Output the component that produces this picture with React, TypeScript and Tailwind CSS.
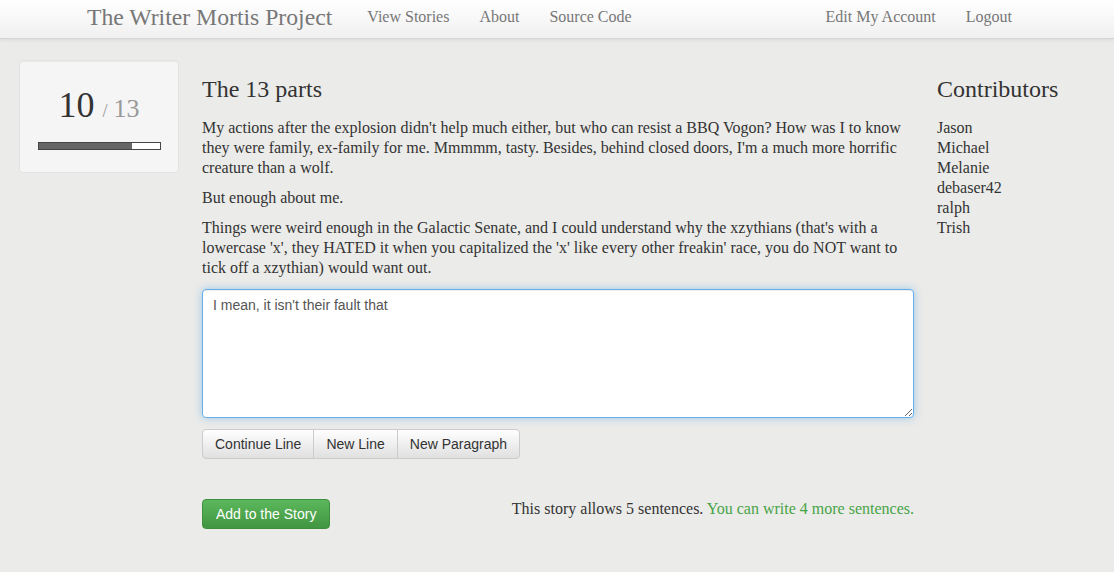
import React from 'react';

const serif = { fontFamily: '"Liberation Serif", "DejaVu Serif", serif' };
const sans = { fontFamily: '"Liberation Sans", Arial, sans-serif' };

function NavLink({ children }: { children: React.ReactNode }) {
  return <a className="px-[15px] text-[16px] text-[#777] leading-[34px]">{children}</a>;
}

function Navbar() {
  return (
    <div className="h-[39px] border-b border-[#d5d5d5] bg-gradient-to-b from-white to-[#f0f0f0] shadow-[0_1px_4px_rgba(0,0,0,0.08)]">
      <div className="mx-auto flex w-[970px] items-center px-[15px]">
        <a className="mr-[20px] text-[23.7px] leading-[34px] text-[#777]">The Writer Mortis Project</a>
        <NavLink>View Stories</NavLink>
        <NavLink>About</NavLink>
        <NavLink>Source Code</NavLink>
        <div className="flex-1" />
        <NavLink>Edit My Account</NavLink>
        <NavLink>Logout</NavLink>
      </div>
    </div>
  );
}

function ProgressWell() {
  const done = 10;
  const total = 13;
  return (
    <div className="flex h-[113px] w-[160px] shrink-0 flex-col items-center rounded border border-[#e3e3e3] bg-[#f5f5f5] pt-[26px] shadow-[inset_0_1px_1px_rgba(0,0,0,0.05)]">
      <div className="flex items-baseline leading-none">
        <span className="text-[36px] text-[#333]">{done}</span>
        <span className="ml-[8px] text-[18px] text-[#999]">/</span>
        <span className="ml-[6px] text-[26px] text-[#999]">{total}</span>
      </div>
      <div className="mt-[19px] h-[8px] w-[123px] border border-[#444] bg-white">
        <div className="h-full bg-[#666]" style={{ width: `${(done / total) * 100}%` }} />
      </div>
    </div>
  );
}

function SegButton({ children, first, last }: { children: React.ReactNode; first?: boolean; last?: boolean }) {
  return (
    <button
      className={
        'h-[30px] border border-[#ccc] bg-gradient-to-b from-white to-[#e0e0e0] px-[12px] text-[14px] text-[#333] ' +
        (first ? 'rounded-l-[4px] ' : '-ml-px ') +
        (last ? 'rounded-r-[4px]' : '')
      }
    >
      {children}
    </button>
  );
}

export default function App() {
  const contributors = ['Jason', 'Michael', 'Melanie', 'debaser42', 'ralph', 'Trish'];
  return (
    <div className="min-h-[572px] bg-[#ebebe9]" style={serif}>
      <Navbar />
      <div className="flex pl-[19px] pt-[21px]">
        <ProgressWell />
        <div className="ml-[23px] w-[712px] shrink-0 pt-[16px]">
          <h1 className="text-[24px] leading-[26px] text-[#333]">The 13 parts</h1>
          <div className="mt-[16px] text-[16px] leading-[20px] text-[#333]">
            <p>
              My actions after the explosion didn't help much either, but who can resist a BBQ Vogon? How was I to know
              they were family, ex-family for me. Mmmmm, tasty. Besides, behind closed doors, I'm a much more horrific
              creature than a wolf.
            </p>
            <p className="mt-[10px]">But enough about me.</p>
            <p className="mt-[10px]">
              Things were weird enough in the Galactic Senate, and I could understand why the xzythians (that's with a
              lowercase 'x', they HATED it when you capitalized the 'x' like every other freakin' race, you do NOT want
              to tick off a xzythian) would want out.
            </p>
          </div>
          <textarea
            className="mt-[11px] block h-[129px] w-full resize-y rounded-[4px] border border-[#66afe9] bg-white px-[10px] pt-[5px] pb-[6px] text-[14px] leading-[20px] text-[#555] shadow-[inset_0_1px_1px_rgba(0,0,0,0.075),0_0_8px_rgba(102,175,233,0.6)] outline-none"
            style={sans}
            defaultValue="I mean, it isn't their fault that"
          />
          <div className="mt-[11px] flex" style={sans}>
            <SegButton first>Continue Line</SegButton>
            <SegButton>New Line</SegButton>
            <SegButton last>New Paragraph</SegButton>
          </div>
          <div className="mt-[38px] flex items-center justify-between">
            <button
              className="h-[30px] rounded-[4px] border border-[#3e8f3e] bg-gradient-to-b from-[#5cb85c] to-[#419641] px-[13px] text-[14px] text-white"
              style={sans}
            >
              Add to the Story
            </button>
            <p className="mb-[10px] text-[16px] text-[#333]">
              This story allows 5 sentences. <span className="text-[#47a447]">You can write 4 more sentences.</span>
            </p>
          </div>
        </div>
        <div className="ml-[23px] pt-[16px]">
          <h2 className="text-[24px] leading-[26px] text-[#333]">Contributors</h2>
          <ul className="mt-[16px] text-[16px] leading-[20px] text-[#333]">
            {contributors.map((c) => (
              <li key={c}>{c}</li>
            ))}
          </ul>
        </div>
      </div>
    </div>
  );
}
